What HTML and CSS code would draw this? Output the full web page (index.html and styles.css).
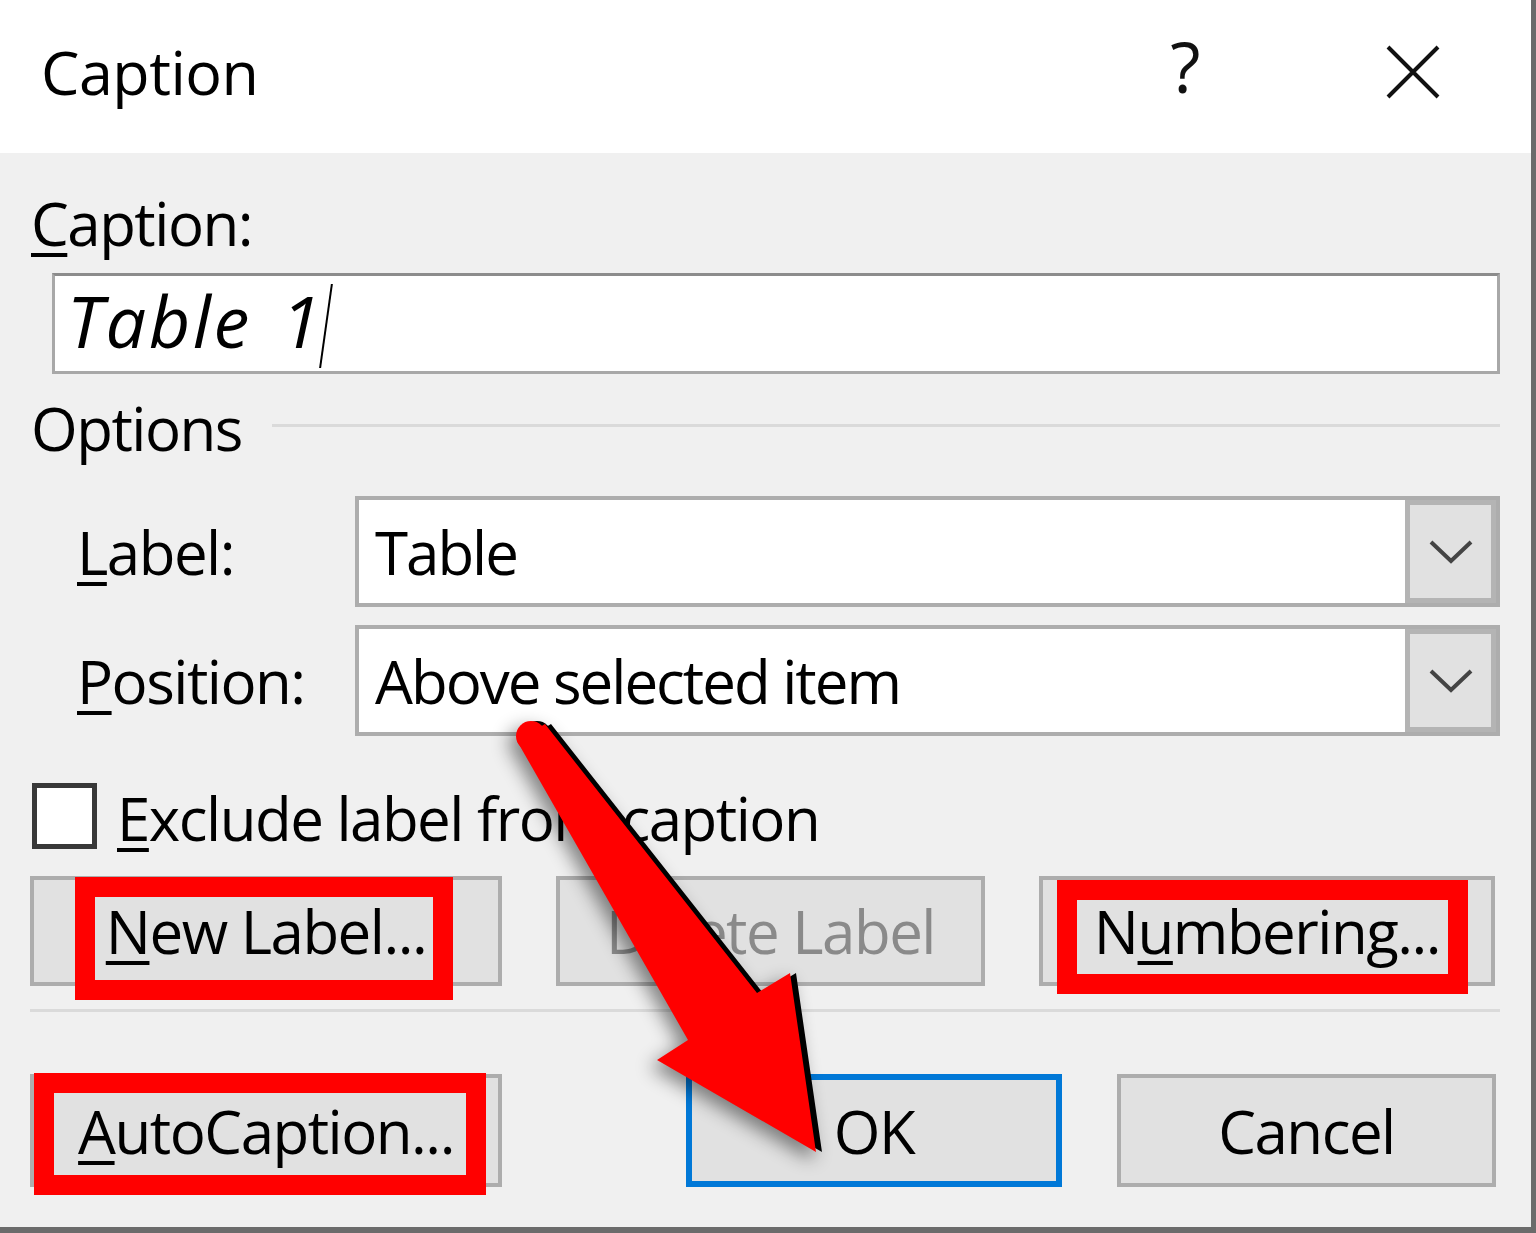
FILE: index.html
```html
<!DOCTYPE html>
<html>
<head>
<meta charset="utf-8">
<link rel="stylesheet" href="styles.css">
</head>
<body>
<div class="dialog">
  <div class="titlebar">
    <div class="title">Caption</div>
    <div class="ctrls">
      <span class="help">?</span>
      <svg class="close" width="56" height="54" viewBox="0 0 56 54"><path d="M3 2 L53 52 M53 2 L3 52" stroke="#111" stroke-width="4" fill="none"/></svg>
    </div>
  </div>
  <div class="content">
    <div class="cap-label"><u>C</u>aption:</div>
    <div class="caption-input"><span class="cap-text">Table 1</span><span class="caret"></span></div>
    <div class="options-row"><span>Options</span><span class="rule"></span></div>
    <div class="field-row first">
      <div class="field-label"><u>L</u>abel:</div>
      <div class="combo"><div class="combo-text">Table</div><div class="combo-btn"><svg width="44" height="26" viewBox="0 0 44 26"><path d="M2 3 L22 22 L42 3" stroke="#444" stroke-width="4" fill="none"/></svg></div></div>
    </div>
    <div class="field-row second">
      <div class="field-label"><u>P</u>osition:</div>
      <div class="combo"><div class="combo-text">Above selected item</div><div class="combo-btn"><svg width="44" height="26" viewBox="0 0 44 26"><path d="M2 3 L22 22 L42 3" stroke="#444" stroke-width="4" fill="none"/></svg></div></div>
    </div>
    <div class="check-row"><span class="checkbox"></span><span class="check-label"><u>E</u>xclude label from caption</span></div>
    <div class="btn-row1">
      <div class="btn w-new"><span><u>N</u>ew Label...</span><span class="hl hl-new"></span></div>
      <div class="btn w-del disabled"><span>Delete Label</span></div>
      <div class="btn w-num"><span>N<u>u</u>mbering...</span><span class="hl hl-num"></span></div>
    </div>
    <div class="separator"></div>
    <div class="btn-row2">
      <div class="btn w-auto"><span><u>A</u>utoCaption...</span><span class="hl hl-auto"></span></div>
      <div class="btn w-ok default"><span>OK</span></div>
      <div class="btn w-cancel"><span>Cancel</span></div>
    </div>
  </div>
  <svg class="arrow" width="1536" height="1233" viewBox="0 0 1536 1233">
    <g class="arrow-g">
      <polygon points="523,741 551,724 763,993 796,973 822,1152 663,1060 694,1040" fill="#000"/>
      <circle cx="537" cy="736" r="15" fill="#000"/>
      <polygon points="517,741 545,724 757,993 790,973 816,1152 657,1060 688,1040" fill="#ff0000"/>
      <circle cx="531" cy="736" r="15" fill="#ff0000"/>
    </g>
  </svg>
</div>
</body>
</html>
```
FILE: styles.css
```css
html, body {
  margin: 0;
  padding: 0;
  background: #f0f0f0;
  overflow: hidden;
}
.dialog {
  position: relative;
  width: 1536px;
  height: 1233px;
  box-sizing: border-box;
  background: #f0f0f0;
  border-right: 5px solid #6b6b6b;
  border-bottom: 6px solid #6b6b6b;
  font-family: "Open Sans", "Noto Sans", sans-serif;
  font-size: 60px;
  line-height: 60px;
  letter-spacing: -1.5px;
  color: #000;
}
u {
  text-decoration-thickness: 4px;
  text-underline-offset: 7px;
}
.titlebar {
  height: 153px;
  background: #fff;
  display: flex;
  align-items: flex-start;
  padding: 42px 90px 0 41px;
  box-sizing: border-box;
}
.title {
  font-size: 61px;
  letter-spacing: -0.5px;
}
.ctrls {
  margin-left: auto;
  display: flex;
  align-items: flex-start;
}
.help {
  font-size: 70px;
  font-weight: 400;
  line-height: 60px;
  margin-top: -6px;
  color: #111;
}
.close {
  margin-left: 186px;
  margin-top: 3px;
}
.content {
  padding: 0 31px 0 30px;
}
.cap-label {
  margin-top: 40px;
  padding-left: 1px;
}
.caption-input {
  margin-top: 20px;
  margin-left: 22px;
  height: 101px;
  box-sizing: border-box;
  background: #fff;
  border: 3px solid #a8a8a8;
  border-top-color: #8c8c8c;
  display: flex;
  align-items: center;
  padding-left: 12px;
}
.cap-text {
  font-style: italic;
  font-size: 72px;
  letter-spacing: 2.5px;
  word-spacing: 8px;
  line-height: 72px;
  margin-top: -8px;
}
.caret {
  display: inline-block;
  width: 2px;
  height: 84px;
  background: #000;
  margin-left: 2px;
  transform: skewX(-8deg);
  margin-top: 4px;
}
.options-row {
  margin-top: 24px;
  display: flex;
  align-items: center;
  padding-left: 1px;
}
.rule {
  flex: 1;
  height: 3px;
  background: #dadada;
  margin-left: 30px;
  margin-top: -6px;
}
.field-row {
  display: grid;
  grid-template-columns: 325px 1fr;
  align-items: center;
}
.field-row.first { margin-top: 38px; }
.field-row.second { margin-top: 18px; }
.field-label {
  padding-left: 47px;
}
.combo {
  height: 111px;
  box-sizing: border-box;
  border: 4px solid #adadad;
  background: #fff;
  display: flex;
  align-items: stretch;
}
.combo-text {
  flex: 1;
  display: flex;
  align-items: center;
  padding-left: 16px;
  letter-spacing: -2px;
}
.combo-btn {
  width: 91px;
  box-sizing: border-box;
  background: #e1e1e1;
  border: 5px solid #b4b4b4;
  display: flex;
  align-items: center;
  justify-content: center;
}
.check-row {
  margin-top: 47px;
  display: flex;
  align-items: center;
}
.checkbox {
  width: 65px;
  height: 66px;
  box-sizing: border-box;
  border: 5px solid #383838;
  background: #fff;
  margin-left: 2px;
}
.check-label {
  margin-left: 20px;
  margin-top: 4px;
}
.btn-row1 {
  margin-top: 27px;
  display: flex;
  gap: 54px;
}
.btn {
  position: relative;
  height: 110px;
  box-sizing: border-box;
  background: #e1e1e1;
  border: 4px solid #adadad;
  display: flex;
  align-items: center;
  justify-content: center;
}
.w-new { width: 472px; }
.w-del { width: 429px; }
.w-num { width: 456px; }
.disabled { color: #8a8a8a; }
.separator {
  margin-top: 23px;
  height: 3px;
  background: #dadada;
}
.btn-row2 {
  margin-top: 62px;
  display: flex;
}
.btn-row2 .btn { height: 113px; }
.w-auto { width: 472px; }
.w-ok {
  width: 376px;
  margin-left: 184px;
}
.default {
  border: 6px solid #0078d7;
}
.w-cancel {
  width: 379px;
  margin-left: 55px;
}
.hl {
  position: absolute;
  box-sizing: border-box;
  border: 20px solid #ff0000;
}
.hl-new { left: 41px; top: -3px; width: 378px; height: 123px; }
.hl-num { left: 14px; top: 0px; width: 411px; height: 114px; }
.hl-auto { left: 0px; top: -5px; width: 452px; height: 122px; }
.arrow {
  position: absolute;
  left: 0;
  top: 0;
  pointer-events: none;
  z-index: 10;
}
.arrow-g {
  filter: drop-shadow(-7px 7px 9px rgba(0, 0, 0, 0.45));
}
```
